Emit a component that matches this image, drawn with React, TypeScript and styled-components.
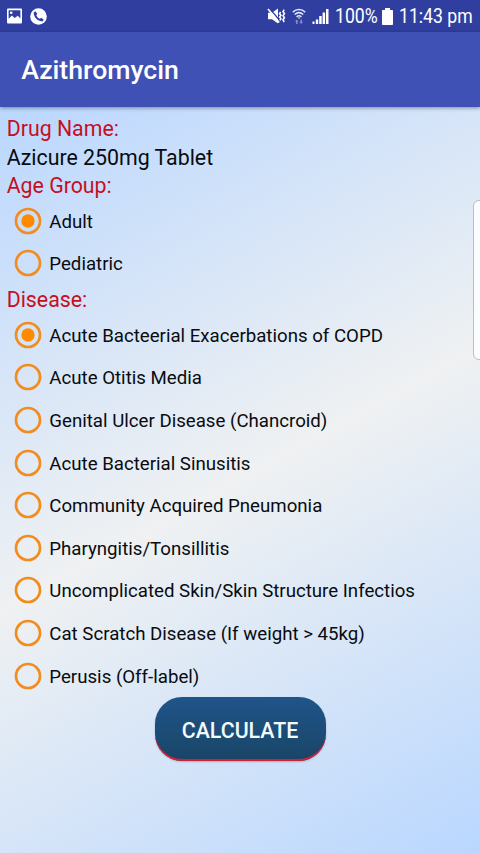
import React, { useState } from 'react';
import styled, { createGlobalStyle } from 'styled-components';

const GlobalStyle = createGlobalStyle`
  * {
    box-sizing: border-box;
  }

  body {
    margin: 0;
    font-family: Roboto, 'Noto Sans', sans-serif;
  }
`;

const Screen = styled.div`
  position: relative;
  display: flex;
  flex-direction: column;
  width: 480px;
  height: 853px;
  overflow: hidden;
`;

const StatusBar = styled.div`
  display: flex;
  align-items: center;
  justify-content: space-between;
  height: 32px;
  padding: 0 7px 0 6px;
  background-color: #303f9f;
  color: #fff;
`;

const StatusIcons = styled.div`
  display: flex;
  align-items: center;
  gap: 7px;

  svg {
    display: block;
  }
`;

const StatusInfo = styled.div`
  display: flex;
  align-items: center;
  gap: 6px;

  svg {
    display: block;
    flex-shrink: 0;
  }
`;

const StatusText = styled.span<{ width: number }>`
  width: ${(props) => props.width}px;
  margin-top: 2px;
  font-size: 19.4px;
  line-height: 24px;
  white-space: nowrap;
  transform: scaleX(0.91);
  transform-origin: left center;
`;

const AppBar = styled.header`
  position: relative;
  display: flex;
  align-items: center;
  height: 74.67px;
  padding: 2px 21.33px 0;
  background-color: #3f51b5;
  box-shadow: 0 1px 4px rgba(0, 0, 0, 0.4);
`;

const Title = styled.h1`
  margin: 0;
  font-size: 26.67px;
  font-weight: 500;
  line-height: 32px;
  color: #fff;
`;

const Content = styled.main`
  display: flex;
  flex: 1;
  flex-direction: column;
  padding: 8px 6.67px 0;
  background: linear-gradient(151deg, #bad7ff 0%, #eff1f2 50%, #b9d7ff 100%);
`;

const Line = styled.div<{ heading?: boolean }>`
  height: 28.44px;
  padding-top: 0.5px;
  font-size: 21.33px;
  line-height: 28.44px;
  color: ${(props) => (props.heading ? '#c4101e' : '#080c10')};
`;

const RadioGroup = styled.div`
  display: flex;
  flex-direction: column;
`;

const RadioRow = styled.div`
  display: flex;
  align-items: center;
  height: 42.67px;
  padding-left: 7.33px;
  gap: 7.33px;
  font-size: 18.67px;
  color: #080c10;
  cursor: pointer;

  svg {
    flex-shrink: 0;
    margin-bottom: 1px;
    overflow: visible;
  }
`;

const RadioLabel = styled.span`
  padding-top: 1px;
  line-height: 24px;
  white-space: nowrap;
`;

const CalculateButton = styled.button`
  align-self: center;
  width: 171px;
  height: 64px;
  flex-shrink: 0;
  margin-top: -0.8px;
  padding: 4px 0 0;
  border: 0;
  border-radius: 27px;
  background: linear-gradient(#20558a, #194566);
  box-shadow: inset 0 -2px 0 #d51f33, 0 1px 2px rgba(0, 0, 0, 0.2);
  font-family: inherit;
  font-size: 21.33px;
  font-weight: 500;
  color: #f2fbff;
  cursor: pointer;
`;

const EdgePanel = styled.div`
  position: absolute;
  top: 200px;
  right: -6px;
  width: 13px;
  height: 160px;
  border: 1px solid #b9bfc4;
  border-radius: 6px;
  background-color: #fafcfd;
`;

const ages = ['Adult', 'Pediatric'];

const diseases = [
  'Acute Bacteerial Exacerbations of COPD',
  'Acute Otitis Media',
  'Genital Ulcer Disease (Chancroid)',
  'Acute Bacterial Sinusitis',
  'Community Acquired Pneumonia',
  'Pharyngitis/Tonsillitis',
  'Uncomplicated Skin/Skin Structure Infectios',
  'Cat Scratch Disease (If weight > 45kg)',
  'Perusis (Off-label)',
];

const PictureIcon = () => (
  <svg width="17" height="16" viewBox="0 0 17 16">
    <path
      d="M2 .5h13q1 0 1 1v13q0 1-1 1H2q-1 0-1-1v-13q0-1 1-1zM2.6 2.2v8.6l3.3-3.2 2.7 2.5 3.2-2.3 2.6 2.6V2.2z"
      fill="#fff"
      fillRule="evenodd"
    />
    <circle cx="5.2" cy="4.8" r="1.3" fill="#fff" />
  </svg>
);

const CallIcon = () => (
  <svg width="17" height="17" viewBox="0 0 17 17">
    <circle cx="8.5" cy="8.5" r="8.3" fill="#fff" />
    <path
      d="M5.3 3.2 3.7 4.6C3.4 9 8 13.7 12.4 13.4l1.4-1.7-2.5-2-1.5 1.1C8.3 10.2 6.9 8.7 6.3 7.2l1-1.4z"
      fill="#303f9f"
    />
  </svg>
);

const MuteIcon = () => (
  <svg width="19" height="18" viewBox="0 0 19 18">
    <path d="M1 5.8h4l6-4.3v15l-6-4.3H1z" fill="#fff" />
    <path d="M2.4 1.4 13 13.8" stroke="#303f9f" strokeWidth="1.4" />
    <path d="M1 2 12.2 15.6" stroke="#fff" strokeWidth="1.6" />
    <path
      d="M13.6 5l-1 1.6 1.3 1.7-1.3 1.7 1.3 1.7-1 1.6M17.2 2.6 16 4.6l1.4 2-1.4 2.1 1.4 2.1-1.4 2.1 1.2 2.1"
      fill="none"
      stroke="#fff"
      strokeWidth="1.6"
    />
  </svg>
);

const WifiIcon = () => (
  <svg width="14" height="17" viewBox="0 0 14 17">
    <g fill="none" stroke="#dfe3fa" strokeWidth="1.6">
      <path d="M.8 4.1C4.4.7 9.6.7 13.2 4.1" />
      <path d="M2.7 6.5C5.3 4.2 8.7 4.2 11.3 6.5" />
      <path d="M4.6 8.8C6 7.6 8 7.6 9.4 8.8" />
    </g>
    <path d="M5.5 9.4h3L7 11z" fill="#dfe3fa" />
    <path d="M3 13.6 4.8 11.4l1.8 2.2H5.5V16H4.1v-2.4zM7.4 13.7h1.1v-2.3h1.4v2.3H11L9.2 16z" fill="#8792d5" />
  </svg>
);

const SignalIcon = () => (
  <svg width="17" height="16" viewBox="0 0 17 16">
    <path
      d="M.5 13.5h2V16h-2zM3.8 11.5h2.4V16H3.8zM7.2 8h2.5v8H7.2zM10.6 4.5h2.5V16h-2.5zM14 1h2.5v15H14z"
      fill="#fff"
    />
  </svg>
);

const BatteryIcon = () => (
  <svg width="11" height="17" viewBox="0 0 11 17">
    <path d="M3 0h5v2h2.2q.8 0 .8.8v13.4q0 .8-.8.8H.8q-.8 0-.8-.8V2.8Q0 2 .8 2H3z" fill="#fff" />
  </svg>
);

const RadioIcon: React.FC<{ checked: boolean }> = ({ checked }) => (
  <svg width="28" height="28" viewBox="0 0 21 21">
    <circle cx="10.5" cy="10.5" r="9" fill="none" stroke="#f28c1c" strokeWidth="2" />
    {checked && <circle cx="10.5" cy="10.5" r="5" fill="#ff8a00" />}
  </svg>
);

const App: React.FC = () => {
  const [age, setAge] = useState<string>(ages[0]);
  const [disease, setDisease] = useState<string>(diseases[0]);

  return (
    <Screen>
      <GlobalStyle />
      <StatusBar>
        <StatusIcons>
          <PictureIcon />
          <CallIcon />
        </StatusIcons>
        <StatusInfo>
          <MuteIcon />
          <WifiIcon />
          <SignalIcon />
          <StatusText width={41}>100%</StatusText>
          <BatteryIcon />
          <StatusText width={74}>11:43 pm</StatusText>
        </StatusInfo>
      </StatusBar>
      <AppBar>
        <Title>Azithromycin</Title>
      </AppBar>
      <Content>
        <Line heading>Drug Name:</Line>
        <Line>Azicure 250mg Tablet</Line>
        <Line heading>Age Group:</Line>
        <RadioGroup>
          {ages.map((item) => (
            <RadioRow key={item} onClick={() => setAge(item)}>
              <RadioIcon checked={age === item} />
              <RadioLabel>{item}</RadioLabel>
            </RadioRow>
          ))}
        </RadioGroup>
        <Line heading>Disease:</Line>
        <RadioGroup>
          {diseases.map((item) => (
            <RadioRow key={item} onClick={() => setDisease(item)}>
              <RadioIcon checked={disease === item} />
              <RadioLabel>{item}</RadioLabel>
            </RadioRow>
          ))}
        </RadioGroup>
        <CalculateButton>CALCULATE</CalculateButton>
      </Content>
      <EdgePanel />
    </Screen>
  );
};

export default App;
